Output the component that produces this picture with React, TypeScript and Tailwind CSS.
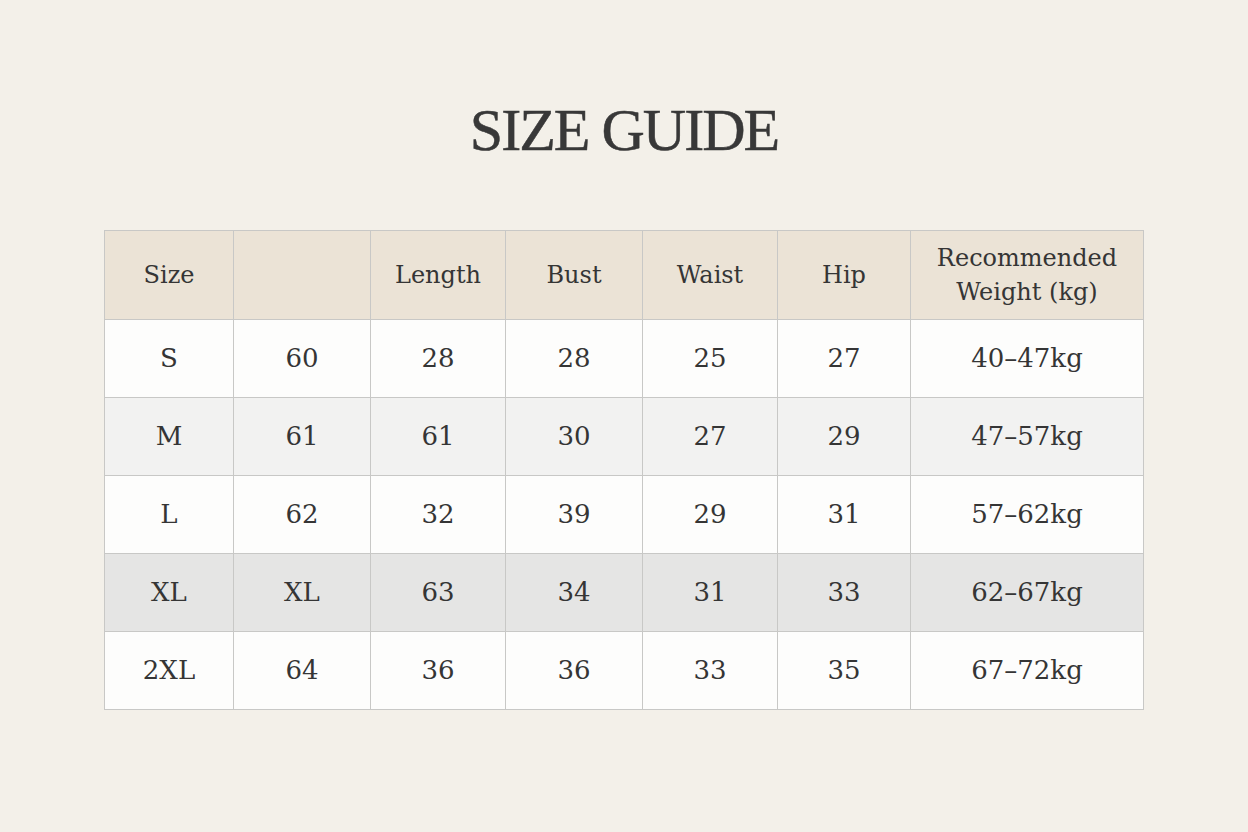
import React from "react";

const cols = [129, 137, 135, 137, 135, 133, 233];

const rows: { cells: string[]; bg: string }[] = [
  { cells: ["S", "60", "28", "28", "25", "27", "40–47kg"], bg: "bg-[#fdfdfc]" },
  { cells: ["M", "61", "61", "30", "27", "29", "47–57kg"], bg: "bg-[#f2f2f1]" },
  { cells: ["L", "62", "32", "39", "29", "31", "57–62kg"], bg: "bg-[#fdfdfc]" },
  { cells: ["XL", "XL", "63", "34", "31", "33", "62–67kg"], bg: "bg-[#e5e5e4]" },
  { cells: ["2XL", "64", "36", "36", "33", "35", "67–72kg"], bg: "bg-[#fdfdfc]" },
];

const th = "border border-[#c8c8c6] font-normal text-[24px] leading-[34px]";

export default function App() {
  return (
    <div
      className="w-[1248px] h-[832px] bg-[#f3f0e9] flex flex-col items-center text-[#353535]"
      style={{ fontFamily: '"DejaVu Serif", "Liberation Serif", serif' }}
    >
      <h1
        className="mt-[94px] text-[60px] leading-[72px] tracking-[-2px] text-[#383838] [-webkit-text-stroke:0.5px_#383838]"
        style={{ fontFamily: '"Liberation Serif", "Times New Roman", serif' }}
      >
        SIZE GUIDE
      </h1>
      <table className="mt-[64px] border-collapse table-fixed w-[1040px] text-[26px]">
        <colgroup>
          {cols.map((w, i) => (
            <col key={i} style={{ width: w }} />
          ))}
        </colgroup>
        <thead>
          <tr className="h-[89px] bg-[#ebe3d6]">
            <th className={th}>Size</th>
            <th className={th}></th>
            <th className={th}>Length</th>
            <th className={th}>Bust</th>
            <th className={th}>Waist</th>
            <th className={th}>Hip</th>
            <th className={th}>
              Recommended
              <br />
              Weight (kg)
            </th>
          </tr>
        </thead>
        <tbody>
          {rows.map((r, i) => (
            <tr key={i} className={`h-[78px] ${r.bg}`}>
              {r.cells.map((c, j) => (
                <td key={j} className="border border-[#c8c8c6] text-center">
                  {c}
                </td>
              ))}
            </tr>
          ))}
        </tbody>
      </table>
    </div>
  );
}
